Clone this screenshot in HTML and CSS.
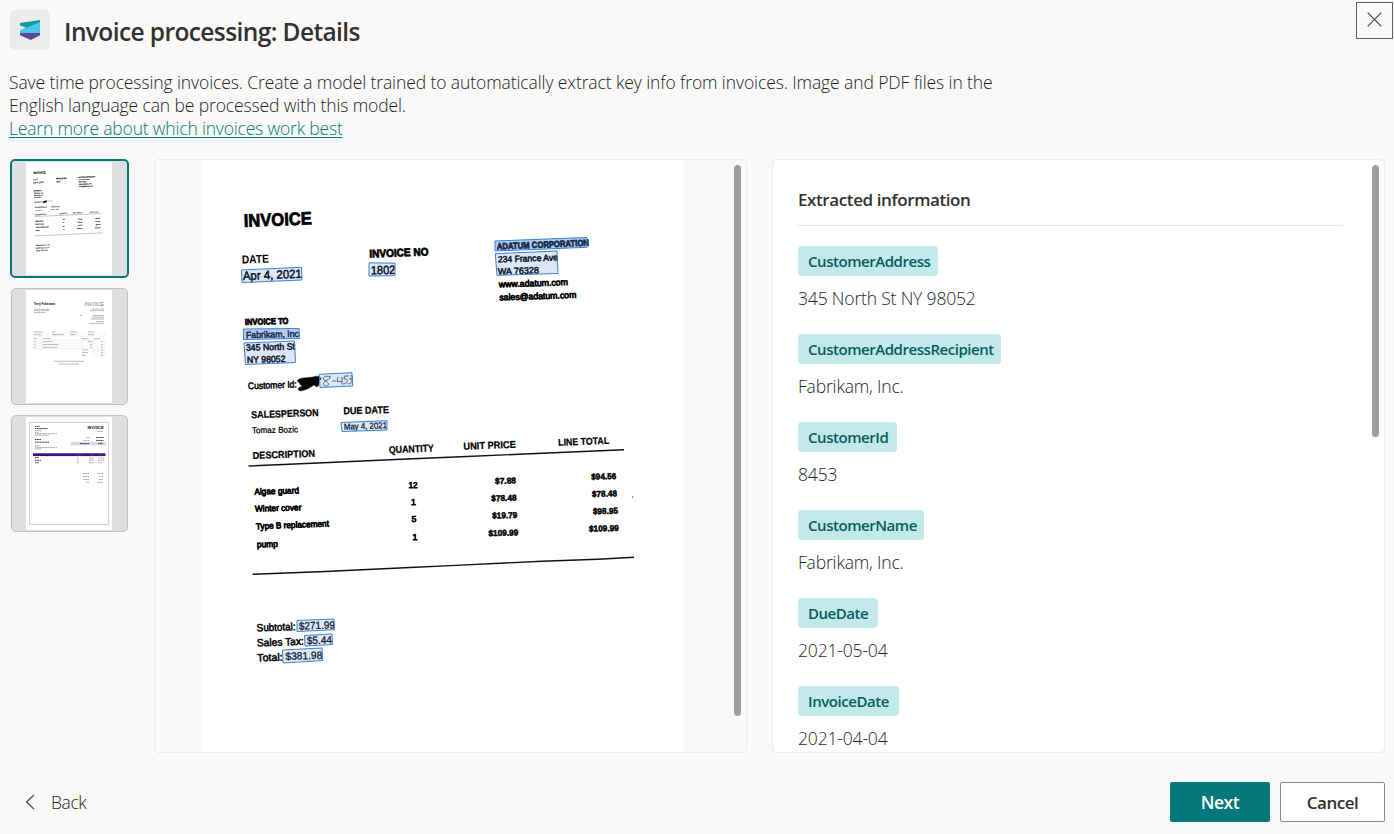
FILE: index.html
```
<!DOCTYPE html>
<html lang="en">
<head>
<meta charset="utf-8">
<title>Invoice processing: Details</title>
<link rel="stylesheet" href="styles.css">
</head>
<body>
<div class="dialog">
  <header class="header">
    <span class="logo">
      <svg width="20" height="20" viewBox="0 0 20 20">
        <path fill="#4bc7ee" d="M0 13V10.2L6.5 7 20 1.6V13H0Z"/>
        <path fill="#169a9b" d="M0 3 20 0V2L6.5 7.8 0 5.5Z"/>
        <path fill="#5f4798" d="M0 13H20V15.3L10.8 20 0 15.3Z"/>
      </svg>
    </span>
    <h1 class="title">Invoice processing: Details</h1>
    <button class="close" aria-label="Close">
      <svg width="15" height="15" viewBox="0 0 15 15"><path d="M.7.7 14.3 14.3M14.3.7.7 14.3"/></svg>
    </button>
  </header>

  <p class="intro"><span class="intro-line first">Save time processing invoices. Create a model trained to automatically extract key info from invoices. Image and PDF files in the</span><span class="intro-line second">English language can be processed with this model.</span><a class="learn" href="#">Learn more about which invoices work best</a></p>

  <main class="content">
    <div class="thumbs">
      <button class="thumb selected">
        <svg class="page" viewBox="202 160 482 634"><use href="#scan" stroke="#000" stroke-width="1"/></svg>
      </button>
      <button class="thumb">
        <svg class="page" viewBox="26 290 86 113">
          <g font-family="Liberation Sans, sans-serif">
            <text x="34" y="304.8" font-size="3.4" font-weight="700" textLength="21" lengthAdjust="spacingAndGlyphs">Terry Fukasawa</text>
            <text x="84.5" y="306" font-size="5" fill="#777" textLength="19.5" lengthAdjust="spacingAndGlyphs">INVOICE</text>
          </g>
          <g class="blur-lines">
            <path d="M34 309.3H50M34 310.7H49M34 312.5H45M92 309H104M90 310.7H104M80 315.5H82M93 315.5H104M92 317.2H104M91 319H104M96 321.5H104M89 323.4H104"/>
            <path d="M34 332H43M52 332H55M70 332H78M88 332H94M34 334.7H42M52 334.7H64M70 334.7H76M88 334.7H94M34 338.7H37M43 338.7H51M82 338.7H89M94 338.7H100"/>
            <path d="M34 341.7H36M43 341.7H52M88 341.7H92M101 341.7H103M34 344.5H36M43 344.5H59M90 344.5H92M101 344.5H103M34 347.3H36M43 347.3H57M90 347.3H92M101 347.3H103M82 350H88M101 350H103M82 352.6H88M101 352.6H103M82 355.3H86M101 355.3H103M54 361.3H84M59 364H79"/>
          </g>
          <path class="grid-lines" d="M34 333.2H104.5V336H34ZM34 340.2H104.5V348.8H34ZM34 343H104.5M34 346H104.5M42.5 340V348.8M81.5 340V348.8M92.5 340V356H104.5V348.8M92.5 351H104.5M92.5 354H104.5"/>
        </svg>
      </button>
      <button class="thumb">
        <svg class="page" viewBox="26 417 86 113">
          <rect x="29.4" y="422.4" width="79.2" height="102" fill="none" stroke="#c8c8cc" stroke-width=".8"/>
          <rect x="70.5" y="441.8" width="35.5" height="3.6" fill="#ded6ec"/>
          <rect x="33" y="453.3" width="72.5" height="2.8" fill="#410c83"/>
          <text x="87.5" y="429" font-family="Liberation Sans, sans-serif" font-size="4.2" font-weight="700" textLength="16" lengthAdjust="spacingAndGlyphs">INVOICE</text>
          <g class="blur-lines dark">
            <path d="M35 426.4H40M35 428.6H48M35 439.5H41M35 442.2H49M35 457.6H39M35 460.3H41M35 462.8H39M96 437.5H104M96 440.4H104M80 443.6H89M98 443.6H103"/>
          </g>
          <g class="blur-lines">
            <path d="M35 430.6H42M35 432.3H39M35 433.7H57M35 435.2H49M97 431.3H103M86 437.5H90M83 440.4H89M35 445.8H40M35 447.4H57M35 448.8H41M76 455H82M90 455H94M99 455H103M77 458.2H79M89 458.2H94M98 458.2H104M77 460.3H79M89 460.3H94M98 460.3H104M77 462.7H79M89 462.7H94M98 462.7H103M83 473.5H89M97 473.5H103M83 476.5H89M99 476.5H103M83 479.5H89M99 479.5H103M86 482.3H89M97 482.3H103"/>
          </g>
        </svg>
      </button>
    </div>

    <section class="preview">
      <svg class="scan" width="482" height="592" viewBox="202 160 482 592">
        <rect x="202" y="160" width="482" height="592" fill="#fff"/>
        <g id="scan" class="ink">
          <text transform="translate(244 227) rotate(-2.2)" font-size="18" class="b heavy" textLength="68" lengthAdjust="spacingAndGlyphs">INVOICE</text>
          <text transform="translate(242 263.5) rotate(-2)" font-size="11.5" class="b" textLength="27" lengthAdjust="spacingAndGlyphs">DATE</text>
          <text transform="translate(243 280) rotate(-2.3)" font-size="12" class="dark" textLength="59" lengthAdjust="spacingAndGlyphs">Apr 4, 2021</text>
          <text transform="translate(369.5 257.5) rotate(-2)" font-size="11" class="b heavy" textLength="59" lengthAdjust="spacingAndGlyphs">INVOICE NO</text>
          <text transform="translate(371 274.5) rotate(-1.5)" font-size="12" class="dark" textLength="24.5" lengthAdjust="spacingAndGlyphs">1802</text>
          <text transform="translate(497 249.5) rotate(-2.3)" font-size="9" class="b heavy" textLength="92" lengthAdjust="spacingAndGlyphs">ADATUM CORPORATION</text>
          <text transform="translate(498 262.5) rotate(-2)" font-size="9" class="dark" textLength="60" lengthAdjust="spacingAndGlyphs">234 France Ave</text>
          <text transform="translate(498 274.7) rotate(-2)" font-size="9.3" class="dark" textLength="41" lengthAdjust="spacingAndGlyphs">WA 76328</text>
          <text transform="translate(499 287.5) rotate(-2)" font-size="9" class="heavy" textLength="69" lengthAdjust="spacingAndGlyphs">www.adatum.com</text>
          <text transform="translate(499.5 300.5) rotate(-2)" font-size="9" class="heavy" textLength="77" lengthAdjust="spacingAndGlyphs">sales@adatum.com</text>
          <text transform="translate(245 325) rotate(-1.5)" font-size="8.7" class="b heavy" textLength="43.5" lengthAdjust="spacingAndGlyphs">INVOICE TO</text>
          <text transform="translate(246 338.2) rotate(-1.5)" font-size="9.2" class="dark" textLength="53" lengthAdjust="spacingAndGlyphs">Fabrikam, Inc</text>
          <text transform="translate(246 350.8) rotate(-1.5)" font-size="9.2" class="dark" textLength="49" lengthAdjust="spacingAndGlyphs">345 North St</text>
          <text transform="translate(247 363) rotate(-1.5)" font-size="9.2" class="dark" textLength="38.5" lengthAdjust="spacingAndGlyphs">NY 98052</text>
          <text transform="translate(248 389.3) rotate(-2.2)" font-size="9.6" class="dark" textLength="49" lengthAdjust="spacingAndGlyphs">Customer Id:</text>
          <path class="fill" d="M297 381C300 377 307 378 313 377C318 375 321 377 321 379C317 381 321 384 317 387L314 385C309 388 307 390 300 391C296 389 299 387 303 386C299 385 300 382 297 381Z"/>
          <path class="hand" d="M331 377C325 375 322 377 324 380C329 382 330 386 326 386C322 386 323 382 327 380C331 378 331 377 329 377M332 381H336M338 377L337 381.5H342M342 377V384.5M349 376H344.5L344 379C349 378 348 384 343 384M350 376C354 375 353 379 349.5 379C354 379 352 385 347.5 383.5"/>
          <text transform="translate(251.3 418.3) rotate(-2)" font-size="10" class="b mid" textLength="67.5" lengthAdjust="spacingAndGlyphs">SALESPERSON</text>
          <text transform="translate(252 433.3) rotate(-1.2)" font-size="8.5" class="mid" textLength="46" lengthAdjust="spacingAndGlyphs">Tomaz Bozic</text>
          <text transform="translate(343.5 414.3) rotate(-1.5)" font-size="10" class="b mid" textLength="45.5" lengthAdjust="spacingAndGlyphs">DUE DATE</text>
          <text transform="translate(344 429.7) rotate(-2)" font-size="8.7" class="mid" textLength="43" lengthAdjust="spacingAndGlyphs">May 4, 2021</text>
          <text transform="translate(252.7 459) rotate(-2)" font-size="10" class="b mid" textLength="62.5" lengthAdjust="spacingAndGlyphs">DESCRIPTION</text>
          <text transform="translate(389 453.2) rotate(-2.3)" font-size="10" class="b mid" textLength="45" lengthAdjust="spacingAndGlyphs">QUANTITY</text>
          <text transform="translate(463.5 449.7) rotate(-2.2)" font-size="10" class="b mid" textLength="52.5" lengthAdjust="spacingAndGlyphs">UNIT PRICE</text>
          <text transform="translate(558.3 445.7) rotate(-2.2)" font-size="9.7" class="b mid" textLength="51" lengthAdjust="spacingAndGlyphs">LINE TOTAL</text>
          <path d="M248.5 466 318 463 401 459.3 455 457 542 453.3 624 449.7"/>
          <g font-size="8.8">
            <text transform="translate(254.5 494.7) rotate(-1.7)" class="heavy" textLength="44.5" lengthAdjust="spacingAndGlyphs">Algae guard</text>
            <text transform="translate(255 511.7) rotate(-1.7)" class="heavy" textLength="46.5" lengthAdjust="spacingAndGlyphs">Winter cover</text>
            <text transform="translate(256 529.4) rotate(-2.3)" class="heavy" textLength="73" lengthAdjust="spacingAndGlyphs">Type B replacement</text>
            <text transform="translate(257 547.5) rotate(-1.7)" class="heavy" textLength="21" lengthAdjust="spacingAndGlyphs">pump</text>
            <text x="408.5" y="487.7" class="heavy" textLength="9" lengthAdjust="spacingAndGlyphs">12</text>
            <text x="411" y="505" class="heavy">1</text>
            <text x="411.5" y="522.2" class="heavy">5</text>
            <text x="412.5" y="539.5" class="heavy">1</text>
          </g>
          <g font-size="8.6">
            <text transform="translate(495 484) rotate(-1.5)" class="b dark" textLength="21" lengthAdjust="spacingAndGlyphs">$7.88</text>
            <text transform="translate(491.3 501.3) rotate(-1.5)" class="b dark" textLength="25.3" lengthAdjust="spacingAndGlyphs">$78.48</text>
            <text transform="translate(492.3 518.6) rotate(-1.5)" class="b dark" textLength="25" lengthAdjust="spacingAndGlyphs">$19.79</text>
            <text transform="translate(488.5 536.2) rotate(-1.5)" class="b dark" textLength="30" lengthAdjust="spacingAndGlyphs">$109.99</text>
            <text transform="translate(591.3 479.7) rotate(-1.5)" class="b dark" textLength="25" lengthAdjust="spacingAndGlyphs">$94.56</text>
            <text transform="translate(592 497) rotate(-1.5)" class="b dark" textLength="25" lengthAdjust="spacingAndGlyphs">$78.48</text>
            <text transform="translate(593 514.3) rotate(-1.5)" class="b dark" textLength="25" lengthAdjust="spacingAndGlyphs">$98.95</text>
            <text transform="translate(589 531.7) rotate(-1.5)" class="b dark" textLength="30" lengthAdjust="spacingAndGlyphs">$109.99</text>
          </g>
          <path d="M252.5 574.3 325 571.5 410 567.5 456 565.4 542 561.3 598 559.2 634 557.3"/>
          <circle cx="632.5" cy="497" r=".6"/>
          <text transform="translate(256.8 631.5) rotate(-2)" font-size="10.6" class="dark" textLength="39" lengthAdjust="spacingAndGlyphs">Subtotal:</text>
          <text transform="translate(299 629.7) rotate(-2)" font-size="10.5" class="mid" textLength="36" lengthAdjust="spacingAndGlyphs">$271.99</text>
          <text transform="translate(257 646.4) rotate(-2)" font-size="10.6" class="dark" textLength="47" lengthAdjust="spacingAndGlyphs">Sales Tax:</text>
          <text transform="translate(307 644.3) rotate(-2)" font-size="10.5" class="mid" textLength="25" lengthAdjust="spacingAndGlyphs">$5.44</text>
          <text transform="translate(257.3 661.5) rotate(-2)" font-size="10.6" class="dark" textLength="25.5" lengthAdjust="spacingAndGlyphs">Total:</text>
          <text transform="translate(285.5 660) rotate(-2)" font-size="10.5" class="mid" textLength="37" lengthAdjust="spacingAndGlyphs">$381.98</text>
        </g>
        <g class="marks">
          <path d="M241.5 270 301.5 267.3 302 280 242 282.5ZM369 262.8 395 263.2V275.7L369 276ZM495.3 253.7 557 251 558 273.5 497 275.3ZM244 343 294.5 341 295.5 362.5 245.5 364.5ZM319.3 374.3 352 372.7 352.7 386 320 387.5ZM297 620.5 334 619 334.5 629.7 297 631.5ZM304.5 635.5 332 634 332.5 644.5 305 646ZM282.5 650 322 648 322.7 660.5 283 663ZM341 422.5 387 420.7V430L342 431.5Z"/>
          <path class="deep" d="M495 241 587 237.5V247.3L495 251ZM243.5 329 299 328.5 299.7 338.5 243.5 339.5Z"/>
        </g>
      </svg>
      <span class="scrollbar long"></span>
    </section>

    <section class="info">
      <div class="info-body">
        <h2 class="info-title">Extracted information</h2>
        <dl class="fields">
          <div class="field"><dt style="width:140px">CustomerAddress</dt><dd>345 North St NY 98052</dd></div>
          <div class="field"><dt style="width:203px">CustomerAddressRecipient</dt><dd>Fabrikam, Inc.</dd></div>
          <div class="field"><dt style="width:99px">CustomerId</dt><dd>8453</dd></div>
          <div class="field"><dt style="width:126px">CustomerName</dt><dd>Fabrikam, Inc.</dd></div>
          <div class="field"><dt style="width:80px">DueDate</dt><dd>2021-05-04</dd></div>
          <div class="field"><dt style="width:101px">InvoiceDate</dt><dd>2021-04-04</dd></div>
        </dl>
      </div>
      <span class="scrollbar short"></span>
    </section>
  </main>

  <footer class="footer">
    <button class="back"><svg width="10" height="16" viewBox="0 0 10 16"><path d="M9 1 1.5 8 9 15"/></svg><span>Back</span></button>
    <div class="actions"><button class="btn primary">Next</button><button class="btn">Cancel</button></div>
  </footer>
</div>
</body>
</html>
```
FILE: styles.css
```
* { box-sizing: border-box; margin: 0; padding: 0; }
body { background: #faf9f8; color: #323130; font-family: "Open Sans", "Noto Sans", sans-serif; overflow: hidden; }
button { font: inherit; color: inherit; background: none; border: 0; }
.dialog { width: 1394px; height: 834px; display: flex; flex-direction: column; }
.header { display: flex; height: 71px; padding: 2px 1px 0 10px; align-items: flex-start; }
.logo { width: 40px; height: 40px; margin-top: 8px; border-radius: 5px; background: #ebebeb; display: grid; place-items: center; }
.title { flex: 1; margin: 12px 0 0 14px; font-size: 24.5px; line-height: 36px; font-weight: 600; letter-spacing: -.6px; white-space: nowrap; }
.close { width: 37px; height: 37px; border: 1px solid #605e5c; display: grid; place-items: center; padding: 0 1px 2px 0; }
.close svg, .back svg { fill: none; stroke: #4a4846; stroke-width: 1.2; }
.intro { height: 88px; padding-left: 9px; font-size: 17.5px; line-height: 23px; color: #201f1e; font-weight: 300; }
.intro-line, .learn { display: block; width: max-content; white-space: nowrap; letter-spacing: -.1px; }
.intro-line.second { letter-spacing: -.12px; }
.learn { letter-spacing: -.18px; color: #03787c; text-decoration: underline; text-underline-offset: 2px; text-decoration-thickness: 1px; }
.content { display: flex; height: 594px; padding: 0 9px 0 10px; }
.thumbs { width: 119px; margin-right: 25px; display: flex; flex-direction: column; align-items: center; gap: 10px; }
.thumb { width: 117px; height: 117px; padding-right: 2px; border: 1px solid #c1c0bf; border-radius: 5px; background: #dfdfde; display: flex; justify-content: center; align-items: center; overflow: hidden; }
.thumb.selected { width: 119px; height: 119px; border: 2px solid #03787c; }
.page { width: 86px; height: 113px; background: #fff; display: block; flex: none; }
.blur-lines path { fill: none; stroke: #666; stroke-width: .75; stroke-dasharray: 1.3 .3; opacity: .75; }
.blur-lines.dark path { stroke: #000; stroke-width: 1; }
.grid-lines { fill: none; stroke: #ddd; stroke-width: .4; }
.preview, .info { border: 1px solid #edebe9; border-radius: 5px; overflow: hidden; display: flex; }
.preview { width: 593px; margin-right: 25px; padding-left: 47px; }
.scan { display: block; flex: none; }
.ink { font-family: "Liberation Sans", Arial, sans-serif; fill: #000; }
.ink path { fill: none; stroke: #111; stroke-width: 1.4; }
.ink text { stroke-width: 0; }
.ink .fill { fill: #050505; stroke-width: .5; }
.ink .hand { stroke: #444; stroke-width: .8; }
.ink .b { font-weight: 700; }
.ink .mid { stroke: #000; stroke-width: .25; }
.ink .dark { stroke: #000; stroke-width: .5; }
.ink .heavy { stroke: #000; stroke-width: .75; }
.marks path { fill: rgba(50, 115, 205, .17); stroke: #3c80ce; stroke-width: 1; }
.marks .deep { fill: rgba(50, 115, 205, .36); }
.scrollbar { width: 7px; border-radius: 4px; background: #a19f9d; margin-top: 5px; flex: none; }
.long { height: 551px; margin-left: 50px; }
.short { height: 272px; margin-left: 29px; }
.info { width: 613px; background: #fff; padding-left: 25px; }
.info-body { width: 545px; flex: none; }
.info-title { height: 66px; padding-top: 27px; border-bottom: 1px solid #e6e5e4; font-size: 17px; line-height: 26px; font-weight: 600; letter-spacing: -.4px; }
.fields { padding-top: 20px; display: flex; flex-direction: column; gap: 20px; }
.field { height: 68px; }
.field dt { height: 30px; border-radius: 4px; background: #c4e9ea; color: #055b5e; padding-left: 10px; font-size: 15px; line-height: 31px; font-weight: 600; letter-spacing: -.45px; white-space: nowrap; }
.field dd { margin-top: 10px; color: #201f1e; font-size: 17.5px; line-height: 25px; font-weight: 300; letter-spacing: -.17px; }
.footer { flex: 1; padding: 29px 9px 0 25px; display: flex; justify-content: space-between; align-items: flex-start; }
.back { height: 40px; display: flex; align-items: center; gap: 16px; font-size: 17.5px; letter-spacing: -.4px; font-weight: 300; color: #201f1e; }
.actions { display: flex; gap: 10px; }
.btn { width: 105px; height: 40px; border: 1px solid #8a8886; border-radius: 2px; background: #fff; font-size: 17px; font-weight: 600; letter-spacing: -.5px; }
.primary { width: 100px; border: 0; background: #03787c; color: #fff; font-size: 17.5px; letter-spacing: -.4px; }
```
